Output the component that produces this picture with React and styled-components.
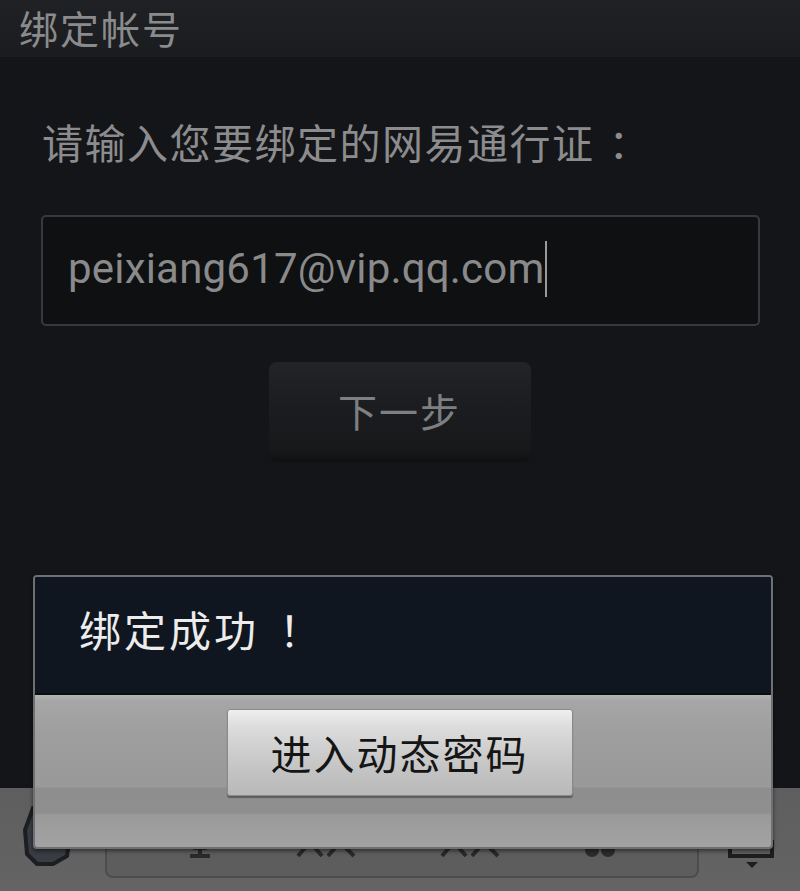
import React from 'react';
import styled, { createGlobalStyle } from 'styled-components';

const GlobalStyle = createGlobalStyle`
  html, body {
    margin: 0;
    padding: 0;
    background: #141518;
  }
  #root {
    height: 891px;
  }
`;

const cjk = `"Noto Sans CJK SC", "Noto Sans", sans-serif`;

const Screen = styled.div`
  position: relative;
  width: 800px;
  height: 891px;
  overflow: hidden;
  display: flex;
  flex-direction: column;
  background: #141518;
  font-family: ${cjk};
`;

const TitleBar = styled.div`
  height: 57px;
  flex-shrink: 0;
  display: flex;
  align-items: center;
  padding: 0 0 4px 19px;
  background: linear-gradient(#202124, #1b1c1f);
  color: #8a8b8d;
  font-size: 39px;
  letter-spacing: 2px;
  line-height: 50px;
  box-sizing: border-box;
`;

const Content = styled.div`
  flex: 1;
  display: flex;
  flex-direction: column;
  padding: 54px 40px 0 41px;
`;

const Label = styled.div`
  color: #8c8c8e;
  font-size: 41px;
  letter-spacing: 1.5px;
  line-height: 60px;
  padding-left: 1px;
`;

const Colon = styled.span`
  margin-left: 14px;
`;

const Field = styled.div`
  margin-top: 44px;
  height: 111px;
  box-sizing: border-box;
  border: 2px solid #38393c;
  border-radius: 5px;
  background: #0e1012;
  display: flex;
  align-items: center;
  padding-left: 25px;
  padding-bottom: 4px;
`;

const FieldText = styled.span`
  font-family: Roboto, "Noto Sans", sans-serif;
  font-size: 42px;
  color: #8a8a8b;
  letter-spacing: 0.2px;
`;

const Caret = styled.span`
  display: inline-block;
  width: 2px;
  height: 56px;
  background: #9a9a9a;
  margin-left: 1px;
`;

const NextButton = styled.div`
  align-self: center;
  margin-top: 36px;
  margin-left: -2px;
  width: 262px;
  height: 100px;
  border-radius: 8px;
  background: linear-gradient(#232427 0%, #1c1d20 40%, #17181a 88%, #0f1011 100%);
  color: #7e7f81;
  font-size: 39px;
  letter-spacing: 2px;
  display: flex;
  align-items: center;
  justify-content: center;
  padding-bottom: 4px;
  box-sizing: border-box;
`;

const BottomBar = styled.div`
  height: 103px;
  flex-shrink: 0;
  display: flex;
  align-items: flex-start;
  padding: 12px 0 0 23px;
  box-sizing: border-box;
  background: linear-gradient(#5e5e5e, #646464);
`;

const TabIcon = styled.div`
  width: ${(p) => p.$w}px;
  height: 70px;
  margin-left: ${(p) => p.$gap || 0}px;
  flex-shrink: 0;
  display: flex;
  align-items: flex-end;
  justify-content: center;
`;

const TabGroup = styled.div`
  margin-left: 32px;
  width: 594px;
  height: 78px;
  box-sizing: border-box;
  border: 2px solid #4c4c4c;
  border-radius: 8px;
  background: #5d5d5d;
  display: flex;
  align-items: flex-end;
  justify-content: space-around;
  padding: 0 40px 16px;
`;

const Dialog = styled.div`
  position: absolute;
  left: 33px;
  top: 575px;
  width: 740px;
  height: 274px;
  box-sizing: border-box;
  border: 2px solid #6f7072;
  border-radius: 4px;
  overflow: hidden;
  display: flex;
  flex-direction: column;
  box-shadow: 0 2px 4px rgba(0, 0, 0, 0.5);
`;

const DialogHeader = styled.div`
  height: 118px;
  flex-shrink: 0;
  background: #0f1620;
  border-bottom: 2px solid #0a0d12;
  display: flex;
  align-items: center;
  padding: 0 0 14px 44px;
  box-sizing: border-box;
  color: #ececec;
  font-size: 42px;
  letter-spacing: 3px;
`;

const Bang = styled.span`
  margin-left: 20px;
`;

const DialogFooter = styled.div`
  flex: 1;
  display: flex;
  justify-content: center;
  align-items: flex-start;
  padding-top: 14px;
  background: linear-gradient(
    #b4b4b4 0px,
    #a6a6a6 6px,
    #9e9e9e 40px,
    #999999 92px,
    #8e8e8e 93px,
    #8f8f8f 118px,
    #9a9a9a 120px,
    #a2a2a2 150px
  );
`;

const DialogButton = styled.div`
  width: 346px;
  height: 87px;
  margin-left: -7px;
  box-sizing: border-box;
  border: 1px solid #8a8a8a;
  border-radius: 3px;
  background: linear-gradient(#efefef 0%, #dcdcdc 20%, #c8c8c8 60%, #b8b8b8 100%);
  box-shadow: 0 2px 1px rgba(0, 0, 0, 0.35);
  color: #151515;
  font-size: 41px;
  letter-spacing: 2px;
  display: flex;
  align-items: center;
  justify-content: center;
  padding-bottom: 2px;
`;

function HexIcon() {
  return (
    <svg width="50" height="70" viewBox="0 0 50 70">
      <path d="M10 8 L40 8 L48 30 L44 56 L30 64 L14 64 L4 54 L2 30 Z" fill="#3a3c44" stroke="#1d1e22" strokeWidth="4" />
    </svg>
  );
}

function HomeGlyph() {
  return (
    <svg width="26" height="20" viewBox="0 0 26 20">
      <path d="M13 2 V16 M3 16 H23 M6 8 H20" stroke="#2a2a2a" strokeWidth="4" fill="none" />
    </svg>
  );
}

function PeopleGlyph() {
  return (
    <svg width="64" height="22" viewBox="0 0 64 22">
      <path d="M4 18 L16 4 L28 18 M34 18 L46 4 L60 18" stroke="#2a2a2a" strokeWidth="4" fill="none" />
    </svg>
  );
}

function ChatGlyph() {
  return (
    <svg width="34" height="18" viewBox="0 0 34 18">
      <circle cx="9" cy="8" r="7" fill="#2c2c2c" />
      <circle cx="25" cy="8" r="7" fill="#2c2c2c" />
    </svg>
  );
}

function MoreGlyph() {
  return (
    <svg width="52" height="70" viewBox="0 0 52 70">
      <path d="M4 40 V56 H46 V40" stroke="#1e1e1e" strokeWidth="4" fill="none" />
      <path d="M20 62 L26 68 L32 62 Z" fill="#1e1e1e" />
    </svg>
  );
}

export default function App() {
  return (
    <Screen>
      <GlobalStyle />
      <TitleBar>绑定帐号</TitleBar>
      <Content>
        <Label>
          请输入您要绑定的网易通行证<Colon>：</Colon>
        </Label>
        <Field>
          <FieldText>peixiang617@vip.qq.com</FieldText>
          <Caret />
        </Field>
        <NextButton>下一步</NextButton>
      </Content>
      <BottomBar>
        <TabIcon $w={50}>
          <HexIcon />
        </TabIcon>
        <TabGroup>
          <HomeGlyph />
          <PeopleGlyph />
          <PeopleGlyph />
          <ChatGlyph />
        </TabGroup>
        <TabIcon $w={52} $gap={27}>
          <MoreGlyph />
        </TabIcon>
      </BottomBar>
      <Dialog>
        <DialogHeader>
          绑定成功<Bang>！</Bang>
        </DialogHeader>
        <DialogFooter>
          <DialogButton>进入动态密码</DialogButton>
        </DialogFooter>
      </Dialog>
    </Screen>
  );
}
